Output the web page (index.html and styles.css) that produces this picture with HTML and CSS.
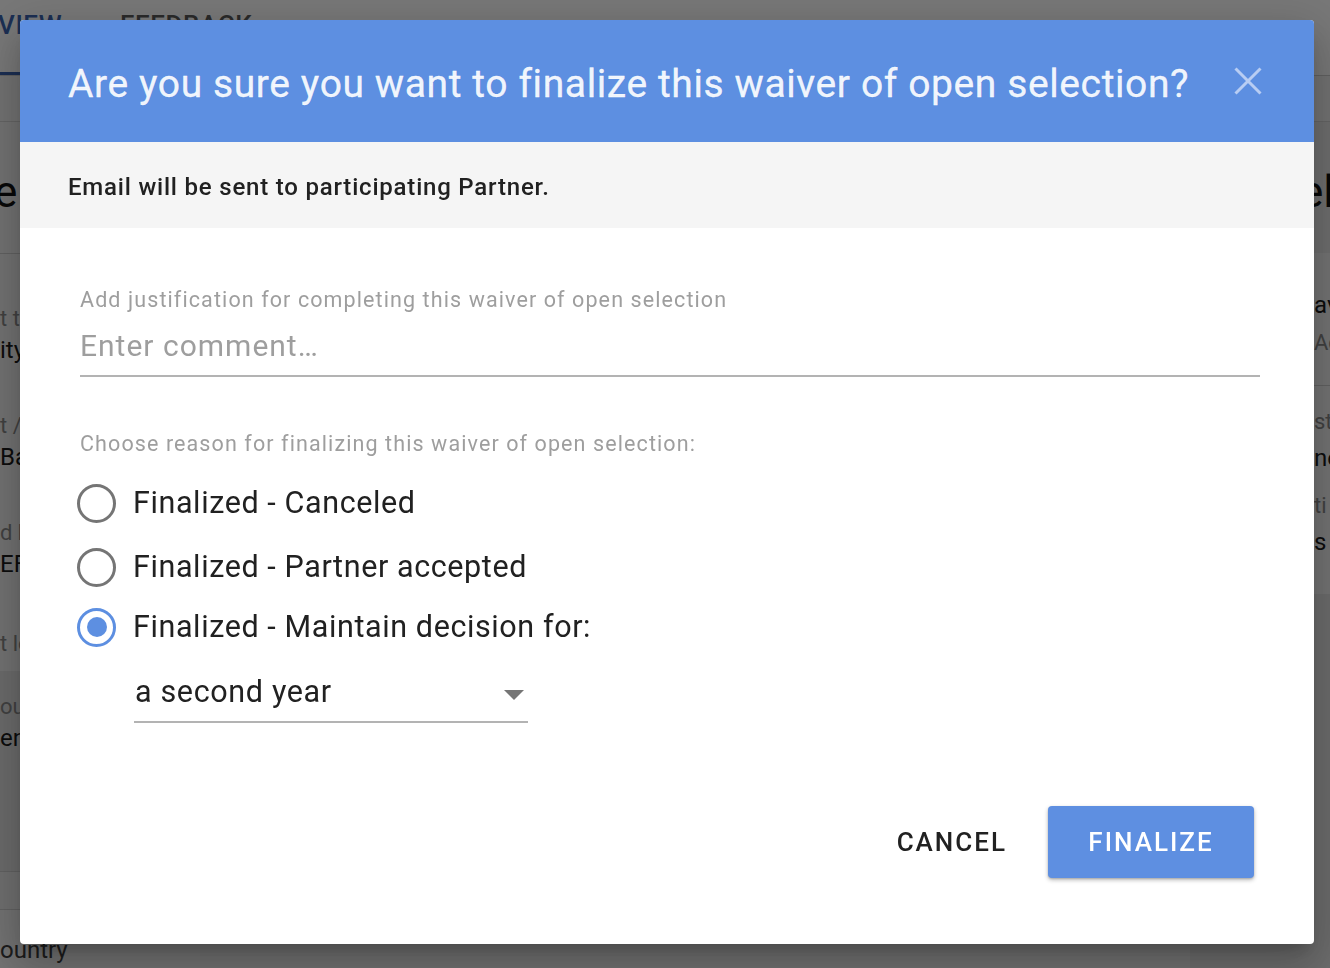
FILE: index.html
```html
<!DOCTYPE html>
<html lang="en">
<head>
<meta charset="utf-8">
<title>Finalize waiver of open selection</title>
<link rel="stylesheet" href="styles.css">
</head>
<body>
<div class="page">
  <div class="tabs">
    <span class="tab tab-active">VIEW</span>
    <span class="tab">FEEDBACK</span>
  </div>
  <div class="subbar"></div>
  <div class="content">
    <div class="col-left">
      <div class="heading">e</div>
      <div class="rule"></div>
      <div class="field"><div class="flabel">t title</div><div class="fvalue">ity</div></div>
      <div class="field"><div class="flabel">t / ty</div><div class="fvalue">Ba</div></div>
      <div class="field"><div class="flabel">d by</div><div class="fvalue">EF</div></div>
      <div class="field field-short"><div class="flabel">t lo</div></div>
      <div class="field-shade"><div class="flabel">ou</div><div class="fvalue">en</div></div>
      <div class="rule"></div>
      <div class="gap-row"></div>
      <div class="rule"></div>
      <div class="field-last"><div class="flabel flabel-dark">ountry</div></div>
    </div>
    <div class="col-mid"></div>
    <div class="col-right">
      <div class="heading heading-right">el</div>
      <div class="rcard">
        <div class="rfield rfield-a"><div class="fvalue">av</div><div class="flabel">Ac</div></div>
        <div class="rule"></div>
        <div class="rfield rfield-b"><div class="flabel">st</div><div class="fvalue">ne</div></div>
        <div class="rfield"><div class="flabel">ti</div><div class="fvalue">s</div></div>
      </div>
    </div>
  </div>
</div>

<div class="overlay"></div>

<div class="dialog" role="dialog" aria-labelledby="dlg-title">
  <div class="dlg-header">
    <h1 class="dlg-title" id="dlg-title">Are you sure you want to finalize this waiver of open selection?</h1>
    <button class="dlg-close" aria-label="Close">
      <svg width="28" height="28" viewBox="0 0 28 28"><path d="M1.5 1.5 L26.5 26.5 M26.5 1.5 L1.5 26.5" stroke="currentColor" stroke-width="3" fill="none"/></svg>
    </button>
  </div>
  <div class="dlg-sub">Email will be sent to participating Partner.</div>
  <div class="dlg-body">
    <div class="field-label">Add justification for completing this waiver of open selection</div>
    <div class="text-input">Enter comment…</div>
    <div class="field-label reason-label">Choose reason for finalizing this waiver of open selection:</div>
    <div class="radios">
      <div class="radio-row"><span class="radio"></span><span class="radio-text">Finalized - Canceled</span></div>
      <div class="radio-row"><span class="radio"></span><span class="radio-text">Finalized - Partner accepted</span></div>
      <div class="radio-row"><span class="radio radio-on"></span><span class="radio-text">Finalized - Maintain decision for:</span></div>
    </div>
    <div class="select">
      <span class="select-value">a second year</span>
      <span class="select-arrow"></span>
    </div>
    <div class="actions">
      <button class="btn btn-flat">CANCEL</button>
      <button class="btn btn-raised">FINALIZE</button>
    </div>
  </div>
</div>
</body>
</html>
```
FILE: styles.css
```css
* { box-sizing: border-box; }
html, body { margin: 0; padding: 0; }
body {
  width: 1330px;
  height: 968px;
  overflow: hidden;
  font-family: Roboto, "Liberation Sans", Arial, sans-serif;
  background: #f0f0f0;
  color: #212121;
}

/* ---------- background page ---------- */
.page { width: 1330px; height: 968px; display: flex; flex-direction: column; }
.tabs {
  height: 76px;
  flex: 0 0 76px;
  background: #ffffff;
  display: flex;
  gap: 58px;
  border-bottom: 1px solid #cfcfcf;
}
.tab {
  font-size: 26px;
  font-weight: 500;
  letter-spacing: 0.6px;
  color: #5a5a5a;
  padding-top: 10px;
  line-height: 30px;
}
.tab-active {
  color: #3a63b0;
  margin-left: -2px;
  width: 64px;
  border-bottom: 3px solid #3a63b0;
}
.subbar { height: 46px; flex: 0 0 46px; background: #f4f4f4; border-bottom: 1px solid #d6d6d6; }
.content { flex: 1; display: flex; }
.col-left { width: 200px; display: flex; flex-direction: column; background: #f3f3f3; }
.col-mid { flex: 1; }
.col-right { width: 140px; display: flex; flex-direction: column; background: #e6e6e6; }
.heading {
  font-size: 44px;
  line-height: 50px;
  height: 131px;
  padding-top: 45px;
  color: #111;
  white-space: nowrap;
}
.col-left .heading { margin-left: -6px; }
.heading-right { padding-left: 110px; background: #eaeaea; }
.rule { height: 1px; background: #cfcfcf; flex: 0 0 1px; }
.field { padding-top: 51px; height: 107px; flex: 0 0 107px; }
.field-short { height: 96px; flex: 0 0 96px; padding-top: 55px; }
.flabel { font-size: 22px; line-height: 28px; color: #8a8a8a; white-space: nowrap; }
.fvalue { font-size: 24px; line-height: 34px; color: #1a1a1a; white-space: nowrap; }
.field-shade { background: #e4e4e4; height: 200px; flex: 0 0 200px; padding-top: 22px; }
.gap-row { height: 37px; flex: 0 0 37px; background: #ededed; }
.field-last { padding-top: 23px; }
.flabel-dark { color: #3c3c3c; font-size: 24px; line-height: 34px; }
.rcard { background: #f6f6f6; padding-left: 124px; height: 341px; display: flex; flex-direction: column; }
.rfield { flex: 0 0 auto; }
.rfield-a { height: 132px; padding-top: 30px; }
.rfield-a .flabel { margin-top: 7px; }
.rfield-b { height: 84px; padding-top: 22px; }
.rfield .fvalue { margin-top: 5px; }
.rfield-b + .rfield { padding-top: 22px; }

.overlay {
  position: fixed;
  inset: 0;
  background: rgba(0, 0, 0, 0.535);
}

/* ---------- dialog ---------- */
.dialog {
  position: fixed;
  left: 20px;
  top: 20px;
  width: 1294px;
  height: 924px;
  background: #ffffff;
  border-radius: 4px;
  overflow: hidden;
  display: flex;
  flex-direction: column;
  box-shadow: 0 11px 15px -7px rgba(0,0,0,0.2), 0 24px 38px 3px rgba(0,0,0,0.14), 0 9px 46px 8px rgba(0,0,0,0.12);
}
.dlg-header {
  height: 122px;
  flex: 0 0 122px;
  background: #5d8fe1;
  display: flex;
  align-items: center;
  justify-content: space-between;
  padding: 0 52px 0 48px;
}
.dlg-title {
  margin: 0;
  font-size: 39px;
  font-weight: 400;
  letter-spacing: 0.6px;
  color: rgba(255, 255, 255, 0.92);
  white-space: nowrap;
  padding-top: 6px;
  -webkit-text-stroke: 0.3px rgba(255, 255, 255, 0.92);
}
.dlg-close {
  border: 0;
  background: transparent;
  padding: 0;
  width: 28px;
  height: 28px;
  color: #b8cdf3;
  display: flex;
}
.dlg-sub {
  height: 86px;
  flex: 0 0 86px;
  background: #f5f5f5;
  display: flex;
  align-items: center;
  padding-left: 48px;
  padding-top: 4px;
  font-size: 24px;
  font-weight: 500;
  letter-spacing: 0.8px;
  color: #212121;
}
.dlg-body {
  flex: 1;
  display: flex;
  flex-direction: column;
  padding: 60px 54px 66px 60px;
}
.field-label {
  font-size: 21.5px;
  line-height: 24px;
  letter-spacing: 1.1px;
  color: #9e9e9e;
}
.text-input {
  margin-top: 16px;
  font-size: 30px;
  line-height: 36px;
  letter-spacing: 1px;
  color: #9e9e9e;
  padding-bottom: 11px;
  border-bottom: 2px solid #b3b3b3;
}
.reason-label { margin-top: 55px; }
.radios { display: flex; flex-direction: column; }
.radio-row {
  display: flex;
  align-items: center;
  height: 40px;
  margin-top: 24px;
}
.radio-row:first-child { margin-top: 27px; }
.radio-row:last-child { margin-top: 20px; }
.radio {
  width: 39px;
  height: 39px;
  flex: 0 0 39px;
  border: 3.5px solid #757575;
  border-radius: 50%;
  margin-left: -3px;
  margin-right: 17px;
  display: flex;
  align-items: center;
  justify-content: center;
}
.radio-on { border-color: #5d8fe1; }
.radio-on::after {
  content: "";
  width: 20px;
  height: 20px;
  border-radius: 50%;
  background: #5d8fe1;
}
.radio-text {
  font-size: 30.5px;
  line-height: 36px;
  letter-spacing: 0.6px;
  color: #212121;
}
.select {
  margin-top: 27px;
  margin-left: 54px;
  width: 394px;
  display: flex;
  align-items: center;
  justify-content: space-between;
  padding: 0 4px 11px 1px;
  border-bottom: 2px solid #b3b3b3;
}
.select-value { font-size: 30.5px; line-height: 36px; letter-spacing: 0.65px; color: #212121; }
.select-arrow {
  width: 0;
  height: 0;
  border-left: 10px solid transparent;
  border-right: 10px solid transparent;
  border-top: 10px solid #757575;
  margin-top: 6px;
}
.actions {
  margin-top: auto;
  display: flex;
  justify-content: flex-end;
  align-items: center;
  margin-right: 6px;
}
.btn {
  font-family: Roboto, "Liberation Sans", Arial, sans-serif;
  font-size: 26px;
  font-weight: 500;
  letter-spacing: 2px;
  border: 0;
  border-radius: 4px;
  height: 72px;
  cursor: pointer;
}
.btn-flat {
  background: transparent;
  color: #212121;
  padding: 0 16px;
  margin-right: 25px;
}
.btn-raised {
  width: 206px;
  background: #5e8fe1;
  color: #ffffff;
  box-shadow: 0 2px 4px rgba(0,0,0,0.28), 0 1px 2px rgba(0,0,0,0.14);
}
```
